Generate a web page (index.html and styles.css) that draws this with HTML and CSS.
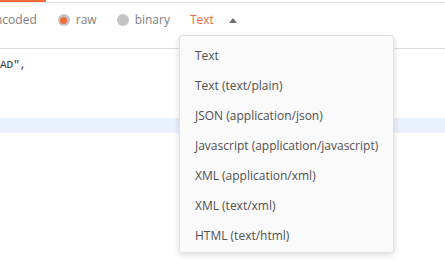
FILE: index.html
```html
<!DOCTYPE html>
<html>
<head>
    <title>Body</title>
    <link rel="stylesheet" href="styles.css">
</head>
<body>
    <div class="tabbar">
        <div class="tab-active"></div>
    </div>

    <div class="options">
        <span class="opt-label">ncoded</span>
        <label class="radio"><span class="dot checked"></span>raw</label>
        <label class="radio"><span class="dot"></span>binary</label>
        <div class="type-select">
            <span class="type-current">Text</span>
            <span class="caret"></span>

            <!-- content type menu -->
            <ul class="menu">
                <li>Text</li>
                <li>Text (text/plain)</li>
                <li>JSON (application/json)</li>
                <li>Javascript (application/javascript)</li>
                <li>XML (application/xml)</li>
                <li>XML (text/xml)</li>
                <li>HTML (text/html)</li>
            </ul>
        </div>
    </div>

    <div class="editor">
        <div class="line">AD",</div>
        <div class="line"></div>
        <div class="line"></div>
        <div class="line"></div>
        <div class="line active"></div>
    </div>
</body>
</html>
```

FILE: styles.css
```css
body {
    margin: 0;
    padding: 0;
    width: 445px;
    height: 270px;
    overflow: hidden;
    background: white;
    font-family: "Open Sans", Arial, sans-serif;
}

.tabbar {
    height: 2px;
    border-bottom: 1px solid #e6e6e6;
}

.tab-active {
    width: 46px;
    height: 2px;
    background-color: #f26b3a;
}

.options {
    display: flex;
    align-items: center;
    height: 34px;
    padding-bottom: 11px;
    border-bottom: 1px solid #dcdcdc;
    font-size: 12px;
    color: #808080;
    line-height: 16px;
}

.opt-label {
    margin-left: -5px;
    margin-right: 21px;
}

.radio {
    display: flex;
    align-items: center;
    gap: 6px;
    margin-right: 20px;
}

.dot {
    width: 12px;
    height: 12px;
    border-radius: 50%;
    background-color: #c4c4c4;
    display: flex;
    align-items: center;
    justify-content: center;
}

.dot.checked::after {
    content: "";
    width: 7px;
    height: 7px;
    border-radius: 50%;
    background-color: #f26b3a;
}

.type-select {
    position: relative;
    display: flex;
    align-items: center;
}

.type-current {
    color: #f26b3a;
    margin-right: 15px;
}

.caret {
    width: 0;
    height: 0;
    border-left: 4px solid transparent;
    border-right: 4px solid transparent;
    border-bottom: 5px solid #707070;
}

.menu {
    position: absolute;
    left: -11px;
    top: 23px;
    width: 213px;
    margin: 0;
    padding: 5px 0 1px;
    list-style: none;
    background-color: #fafafa;
    border: 1px solid #e2e2e2;
    border-radius: 3px;
    box-shadow: 0 2px 6px rgba(0, 0, 0, 0.15);
    z-index: 2;
}

.menu li {
    height: 30px;
    line-height: 30px;
    padding-left: 15px;
    font-size: 12px;
    color: #505050;
    white-space: nowrap;
}

.editor {
    padding-top: 9px;
    font-family: "Liberation Mono", monospace;
    font-size: 11px;
    color: #333;
}

.line {
    height: 15px;
    line-height: 15px;
}

.line.active {
    background-color: #e8f1fc;
}
```
